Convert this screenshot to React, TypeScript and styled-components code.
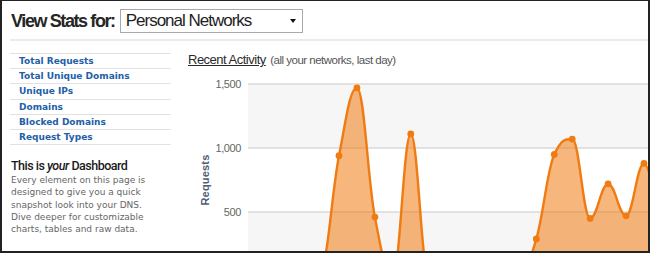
import React, {FC} from 'react'
import styled, {createGlobalStyle} from 'styled-components'

const GlobalStyle = createGlobalStyle`
  html, body {
    margin: 0;
    padding: 0;
    background: #fff;
  }
  * {
    box-sizing: border-box;
  }
`

const Frame = styled.div`
  width: 650px;
  height: 253px;
  overflow: hidden;
  border-style: solid;
  border-color: #222;
  border-width: 1px 2px 2px 2px;
  background: #fff;
  display: flex;
  flex-direction: column;
`

const Header = styled.div`
  display: flex;
  align-items: center;
  padding: 8px 0 0 9px;
`

const HeaderTitle = styled.h1`
  margin: 0;
  font-family: "Liberation Sans", Arial, sans-serif;
  font-size: 18px;
  font-weight: bold;
  letter-spacing: -1.4px;
  color: #262626;
  line-height: 24px;
`

const SelectBox = styled.div`
  margin-left: 5px;
  width: 183px;
  height: 24px;
  border: 1px solid #a9a9a9;
  background: #fff;
  display: flex;
  align-items: center;
  justify-content: space-between;
  padding: 0 6px 0 5px;
  font-family: "Liberation Sans", Arial, sans-serif;
  font-size: 17px;
  letter-spacing: -1px;
  color: #1e1e1e;
`

const Divider = styled.div`
  margin: 6px 0 0 8px;
  height: 2px;
  background: #ebebeb;
`

const Body = styled.div`
  flex: 1;
  display: flex;
  min-height: 0;
`

const Sidebar = styled.div`
  width: 161px;
  margin-left: 8px;
  padding-top: 12px;
  flex-shrink: 0;
`

const NavList = styled.ul`
  list-style: none;
  margin: 0;
  padding: 0;
  border-top: 1px solid #e2e2e2;
`

const NavItem = styled.li`
  height: 15.2px;
  line-height: 14.2px;
  border-bottom: 1px solid #e2e2e2;
  padding-left: 9px;
  font-family: "DejaVu Sans", Verdana, sans-serif;
  font-size: 9px;
  font-weight: bold;
  color: #2360a8;
`

const Dashboard = styled.div`
  margin-top: 13px;
  padding-left: 1px;
`

const DashTitle = styled.div`
  font-family: Roboto, "Liberation Sans", Arial, sans-serif;
  font-size: 12.5px;
  font-weight: 500;
  letter-spacing: -0.5px;
  line-height: 15px;
  color: #1a1a1a;
  em {
    font-style: italic;
  }
`

const DashText = styled.p`
  margin: 1px 0 0 0;
  font-family: "DejaVu Sans", Verdana, sans-serif;
  font-size: 9px;
  line-height: 12.2px;
  color: #666;
  white-space: nowrap;
`

const ChartSection = styled.div`
  flex: 1;
  display: flex;
  flex-direction: column;
  min-width: 0;
`

const ChartTitle = styled.div`
  padding: 10px 0 0 17px;
  line-height: 16px;
  font-family: "Liberation Sans", Arial, sans-serif;
  white-space: nowrap;
`

const TitleMain = styled.span`
  font-size: 13px;
  letter-spacing: -0.5px;
  color: #2b2b2b;
  text-decoration: underline;
`

const TitleNote = styled.span`
  font-size: 11.5px;
  letter-spacing: -0.5px;
  color: #555;
`

const ChartSvg = styled.svg`
  display: block;
  flex-shrink: 0;
`

// page coordinates: zero at y=275, 64px per 500 requests
const X0 = 338
const STEP = 17.94
const valueToY = (v: number) => 275 - (v * 64) / 500

const values = [
  0, 0, 60, 940, 1470, 460, 0, 1110, 0, 0, 0, 0, 0, 0, 290, 950, 1070, 450, 720, 470, 880, 270,
]
const FIRST_K = -3

const points = values.map((v, i) => ({x: X0 + (FIRST_K + i) * STEP, y: valueToY(v)}))

// highcharts-like spline
const splinePath = (pts: {x: number; y: number}[]) => {
  const smoothing = 1.5
  const denom = smoothing + 1
  const conts = pts.map((p, i) => {
    const last = pts[i - 1]
    const next = pts[i + 1]
    if (!last || !next) return {lx: p.x, ly: p.y, rx: p.x, ry: p.y}
    const lx = (smoothing * p.x + last.x) / denom
    let ly = (smoothing * p.y + last.y) / denom
    const rx = (smoothing * p.x + next.x) / denom
    let ry = (smoothing * p.y + next.y) / denom
    const corr = ((ry - ly) * (rx - p.x)) / (rx - lx) + p.y - ry
    ly += corr
    ry += corr
    if (ly > last.y && ly > p.y) {
      ly = Math.max(last.y, p.y)
      ry = 2 * p.y - ly
    } else if (ly < last.y && ly < p.y) {
      ly = Math.min(last.y, p.y)
      ry = 2 * p.y - ly
    }
    if (ry > next.y && ry > p.y) {
      ry = Math.max(next.y, p.y)
      ly = 2 * p.y - ry
    } else if (ry < next.y && ry < p.y) {
      ry = Math.min(next.y, p.y)
      ly = 2 * p.y - ry
    }
    return {lx, ly, rx, ry}
  })
  let d = `M ${pts[0].x} ${pts[0].y}`
  for (let i = 1; i < pts.length; i++) {
    const a = conts[i - 1]
    const b = conts[i]
    d += ` C ${a.rx} ${a.ry} ${b.lx} ${b.ly} ${pts[i].x} ${pts[i].y}`
  }
  return d
}

const linePath = splinePath(points)
const areaPath = `${linePath} L ${points[points.length - 1].x} 275 L ${points[0].x} 275 Z`

const ticks = [
  {label: '1,500', y: 83},
  {label: '1,000', y: 147},
  {label: '500', y: 211},
]

const ActivityChart: FC = () => (
  <ChartSvg width={478} height={184} viewBox='170 67 478 184'>
    <rect x={247} y={83} width={410} height={64} fill='#f6f6f6'/>
    <rect x={247} y={211} width={410} height={80} fill='#f6f6f6'/>
    {ticks.map(t => (
      <g key={t.label}>
        <line x1={247} x2={660} y1={t.y} y2={t.y} stroke='#d8d8d8' strokeWidth={1.5}/>
        <text
          x={240}
          y={t.y + 4}
          textAnchor='end'
          fontFamily='"Liberation Sans", Arial, sans-serif'
          fontSize={11}
          letterSpacing={-0.4}
          fill='#666'
        >
          {t.label}
        </text>
      </g>
    ))}
    <text
      transform='translate(208 179) rotate(-90)'
      textAnchor='middle'
      fontFamily='"Liberation Sans", Arial, sans-serif'
      fontSize={11}
      fontWeight='bold'
      letterSpacing={0.2}
      fill='#4f5e74'
    >
      Requests
    </text>
    <path d={areaPath} fill='rgba(240,124,16,0.55)'/>
    <path d={linePath} fill='none' stroke='#f07b12' strokeWidth={2.4} strokeLinejoin='round'/>
    {points.filter(p => p.y < 262).map((p, i) => (
      <circle key={i} cx={p.x} cy={p.y} r={3.4} fill='#f07b12'/>
    ))}
  </ChartSvg>
)

const navItems = ['Total Requests', 'Total Unique Domains', 'Unique IPs', 'Domains', 'Blocked Domains', 'Request Types']

const App: FC = () => {
  return (
    <>
      <GlobalStyle/>
      <Frame>
        <Header>
          <HeaderTitle>View Stats for:</HeaderTitle>
          <SelectBox>
            <span>Personal Networks</span>
            <svg width='6' height='4' viewBox='0 0 6 4'>
              <path d='M0 0 H6 L3 4 Z' fill='#111'/>
            </svg>
          </SelectBox>
        </Header>
        <Divider/>
        <Body>
          <Sidebar>
            <NavList>
              {navItems.map(item => (
                <NavItem key={item}>{item}</NavItem>
              ))}
            </NavList>
            <Dashboard>
              <DashTitle>This is <em>your</em> Dashboard</DashTitle>
              <DashText>
                Every element on this page is<br/>
                designed to give you a quick<br/>
                snapshot look into your DNS.<br/>
                Dive deeper for customizable<br/>
                charts, tables and raw data.
              </DashText>
            </Dashboard>
          </Sidebar>
          <ChartSection>
            <ChartTitle>
              <TitleMain>Recent Activity</TitleMain> <TitleNote>(all your networks, last day)</TitleNote>
            </ChartTitle>
            <ActivityChart/>
          </ChartSection>
        </Body>
      </Frame>
    </>
  )
}

export default App
